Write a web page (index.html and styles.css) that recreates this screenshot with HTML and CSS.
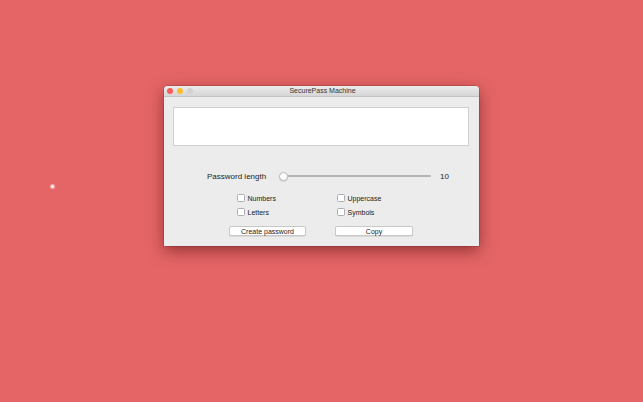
FILE: index.html
```html
<!DOCTYPE html>
<html>
<head>
<meta charset="utf-8">
<link rel="stylesheet" href="styles.css">
</head>
<body>
<div class="desktop">
  <span class="cursor-dot"></span>
  <div class="window">
    <div class="titlebar">
      <div class="lights">
        <span class="light close"></span>
        <span class="light min"></span>
        <span class="light zoom"></span>
      </div>
      <div class="title">SecurePass Machine</div>
    </div>
    <div class="content">
      <div class="output"></div>
      <div class="length-row">
        <span class="length-label">Password length</span>
        <div class="slider"><span class="track"></span><span class="knob"></span></div>
        <span class="length-value">10</span>
      </div>
      <div class="options">
        <label class="option"><span class="box"></span>Numbers</label>
        <label class="option"><span class="box"></span>Uppercase</label>
        <label class="option"><span class="box"></span>Letters</label>
        <label class="option"><span class="box"></span>Symbols</label>
      </div>
      <div class="buttons">
        <button class="btn btn-create">Create password</button>
        <button class="btn btn-copy">Copy</button>
      </div>
    </div>
  </div>
</div>
</body>
</html>
```
FILE: styles.css
```css
html, body {
  margin: 0;
  padding: 0;
}
body {
  width: 643px;
  height: 402px;
  overflow: hidden;
  background: #e56566;
  font-family: "Liberation Sans", Arial, sans-serif;
  color: #1e1e1e;
}
.desktop {
  position: relative;
  width: 643px;
  height: 402px;
}
.cursor-dot {
  position: absolute;
  left: 51px;
  top: 185px;
  width: 3px;
  height: 3px;
  border-radius: 50%;
  background: #fff4f2;
  box-shadow: 0 0 1px 1px rgba(255, 220, 215, 0.6);
}
.window {
  position: absolute;
  left: 164px;
  top: 86px;
  width: 315px;
  height: 160px;
  background: #ececec;
  border-radius: 4px 4px 0 0;
  box-shadow: 0 5px 16px rgba(70, 0, 0, 0.5), 0 0 0 0.5px rgba(0, 0, 0, 0.25);
  display: flex;
  flex-direction: column;
  overflow: hidden;
}
.titlebar {
  position: relative;
  height: 10px;
  flex: none;
  background: linear-gradient(#ececec, #d6d6d6);
  border-bottom: 1px solid #c4c4c4;
  display: flex;
  align-items: center;
  justify-content: center;
}
.lights {
  position: absolute;
  left: 3px;
  top: 2px;
  display: flex;
  gap: 4px;
}
.light {
  width: 6px;
  height: 6px;
  border-radius: 50%;
  display: block;
}
.close { background: #fc5b57; }
.min { background: #fdbb2f; }
.zoom { background: #d2d2d2; }
.title {
  font-size: 7px;
  color: #333;
  line-height: 10px;
  padding-left: 2px;
}
.content {
  padding: 10px 10px 0 9px;
  display: flex;
  flex-direction: column;
}
.output {
  height: 37px;
  background: #ffffff;
  border: 1px solid #d0d0d0;
}
.length-row {
  margin-top: 24px;
  height: 12px;
  display: flex;
  align-items: center;
  padding-left: 34px;
}
.length-label {
  font-size: 8px;
  width: 72px;
  white-space: nowrap;
}
.slider {
  position: relative;
  width: 152px;
  height: 12px;
  display: flex;
  align-items: center;
}
.track {
  display: block;
  width: 100%;
  height: 2px;
  margin-left: 4px;
  background: #b4b4b4;
  border-radius: 1px;
}
.knob {
  position: absolute;
  left: 0;
  top: 2px;
  width: 7px;
  height: 7px;
  border-radius: 50%;
  background: #fff;
  border: 0.5px solid #bdbdbd;
  box-shadow: 0 0.5px 1px rgba(0, 0, 0, 0.2);
}
.length-value {
  font-size: 8px;
  margin-left: 9px;
}
.options {
  margin-top: 9px;
  margin-left: 64px;
  display: grid;
  grid-template-columns: 100px 100px;
  grid-auto-rows: 14px;
}
.option {
  display: flex;
  align-items: center;
  font-size: 7px;
  color: #222;
}
.box {
  display: block;
  width: 5.5px;
  height: 5.5px;
  border: 0.75px solid #adadad;
  border-radius: 1.5px;
  background: #fff;
  margin-right: 3px;
}
.buttons {
  margin-top: 7px;
  margin-left: 56px;
  display: flex;
  gap: 29px;
}
.btn {
  height: 10px;
  padding: 0;
  margin: 0;
  font-family: "Liberation Sans", Arial, sans-serif;
  font-size: 7px;
  line-height: 9px;
  color: #222;
  background: #ffffff;
  border: 0.5px solid #c8c8c8;
  border-radius: 2px;
  box-shadow: 0 0.5px 0.5px rgba(0, 0, 0, 0.15);
}
.btn-create { width: 77px; }
.btn-copy { width: 78px; }
```
